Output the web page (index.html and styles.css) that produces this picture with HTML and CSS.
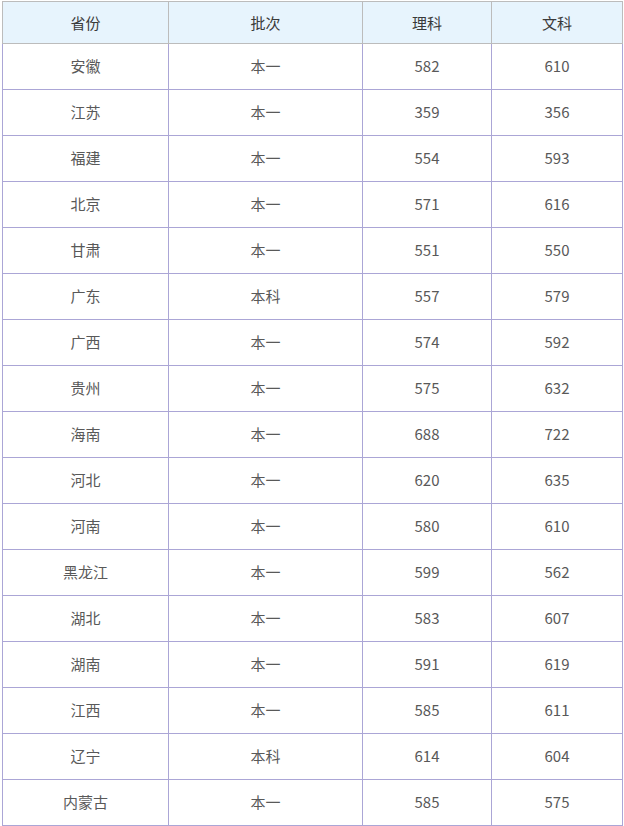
FILE: index.html
```html
<!DOCTYPE html>
<html lang="zh-CN">
<head>
<meta charset="utf-8">
<title>分数线</title>
<link rel="stylesheet" href="styles.css">
</head>
<body>
<table class="score-table">
  <colgroup>
    <col class="c1"><col class="c2"><col class="c3"><col class="c4">
  </colgroup>
  <thead>
    <tr><th>省份</th><th>批次</th><th>理科</th><th>文科</th></tr>
  </thead>
  <tbody>
    <tr><td>安徽</td><td>本一</td><td>582</td><td>610</td></tr>
    <tr><td>江苏</td><td>本一</td><td>359</td><td>356</td></tr>
    <tr><td>福建</td><td>本一</td><td>554</td><td>593</td></tr>
    <tr><td>北京</td><td>本一</td><td>571</td><td>616</td></tr>
    <tr><td>甘肃</td><td>本一</td><td>551</td><td>550</td></tr>
    <tr><td>广东</td><td>本科</td><td>557</td><td>579</td></tr>
    <tr><td>广西</td><td>本一</td><td>574</td><td>592</td></tr>
    <tr><td>贵州</td><td>本一</td><td>575</td><td>632</td></tr>
    <tr><td>海南</td><td>本一</td><td>688</td><td>722</td></tr>
    <tr><td>河北</td><td>本一</td><td>620</td><td>635</td></tr>
    <tr><td>河南</td><td>本一</td><td>580</td><td>610</td></tr>
    <tr><td>黑龙江</td><td>本一</td><td>599</td><td>562</td></tr>
    <tr><td>湖北</td><td>本一</td><td>583</td><td>607</td></tr>
    <tr><td>湖南</td><td>本一</td><td>591</td><td>619</td></tr>
    <tr><td>江西</td><td>本一</td><td>585</td><td>611</td></tr>
    <tr><td>辽宁</td><td>本科</td><td>614</td><td>604</td></tr>
    <tr><td>内蒙古</td><td>本一</td><td>585</td><td>575</td></tr>
  </tbody>
</table>
</body>
</html>
```
FILE: styles.css
```css
html, body {
  margin: 0;
  padding: 0;
  background: #ffffff;
}
body {
  padding: 1px 0 0 2px;
  font-family: "Noto Sans CJK SC", "Noto Sans", sans-serif;
}
.score-table {
  border-collapse: collapse;
  table-layout: fixed;
  width: 620px;
}
.c1 { width: 166px; }
.c2 { width: 194px; }
.c3 { width: 129px; }
.c4 { width: 131px; }
.score-table th {
  height: 41px;
  padding: 0;
  background: #e7f4fd;
  border: 1px solid #bcbcbc;
  color: #3a3a3a;
  font-size: 15px;
  font-weight: normal;
  text-align: center;
  vertical-align: middle;
}
.score-table td {
  height: 43px;
  padding: 0 0 2px;
  border: 1px solid #aba6d6;
  color: #595959;
  font-size: 15px;
  text-align: center;
  vertical-align: middle;
}
```
